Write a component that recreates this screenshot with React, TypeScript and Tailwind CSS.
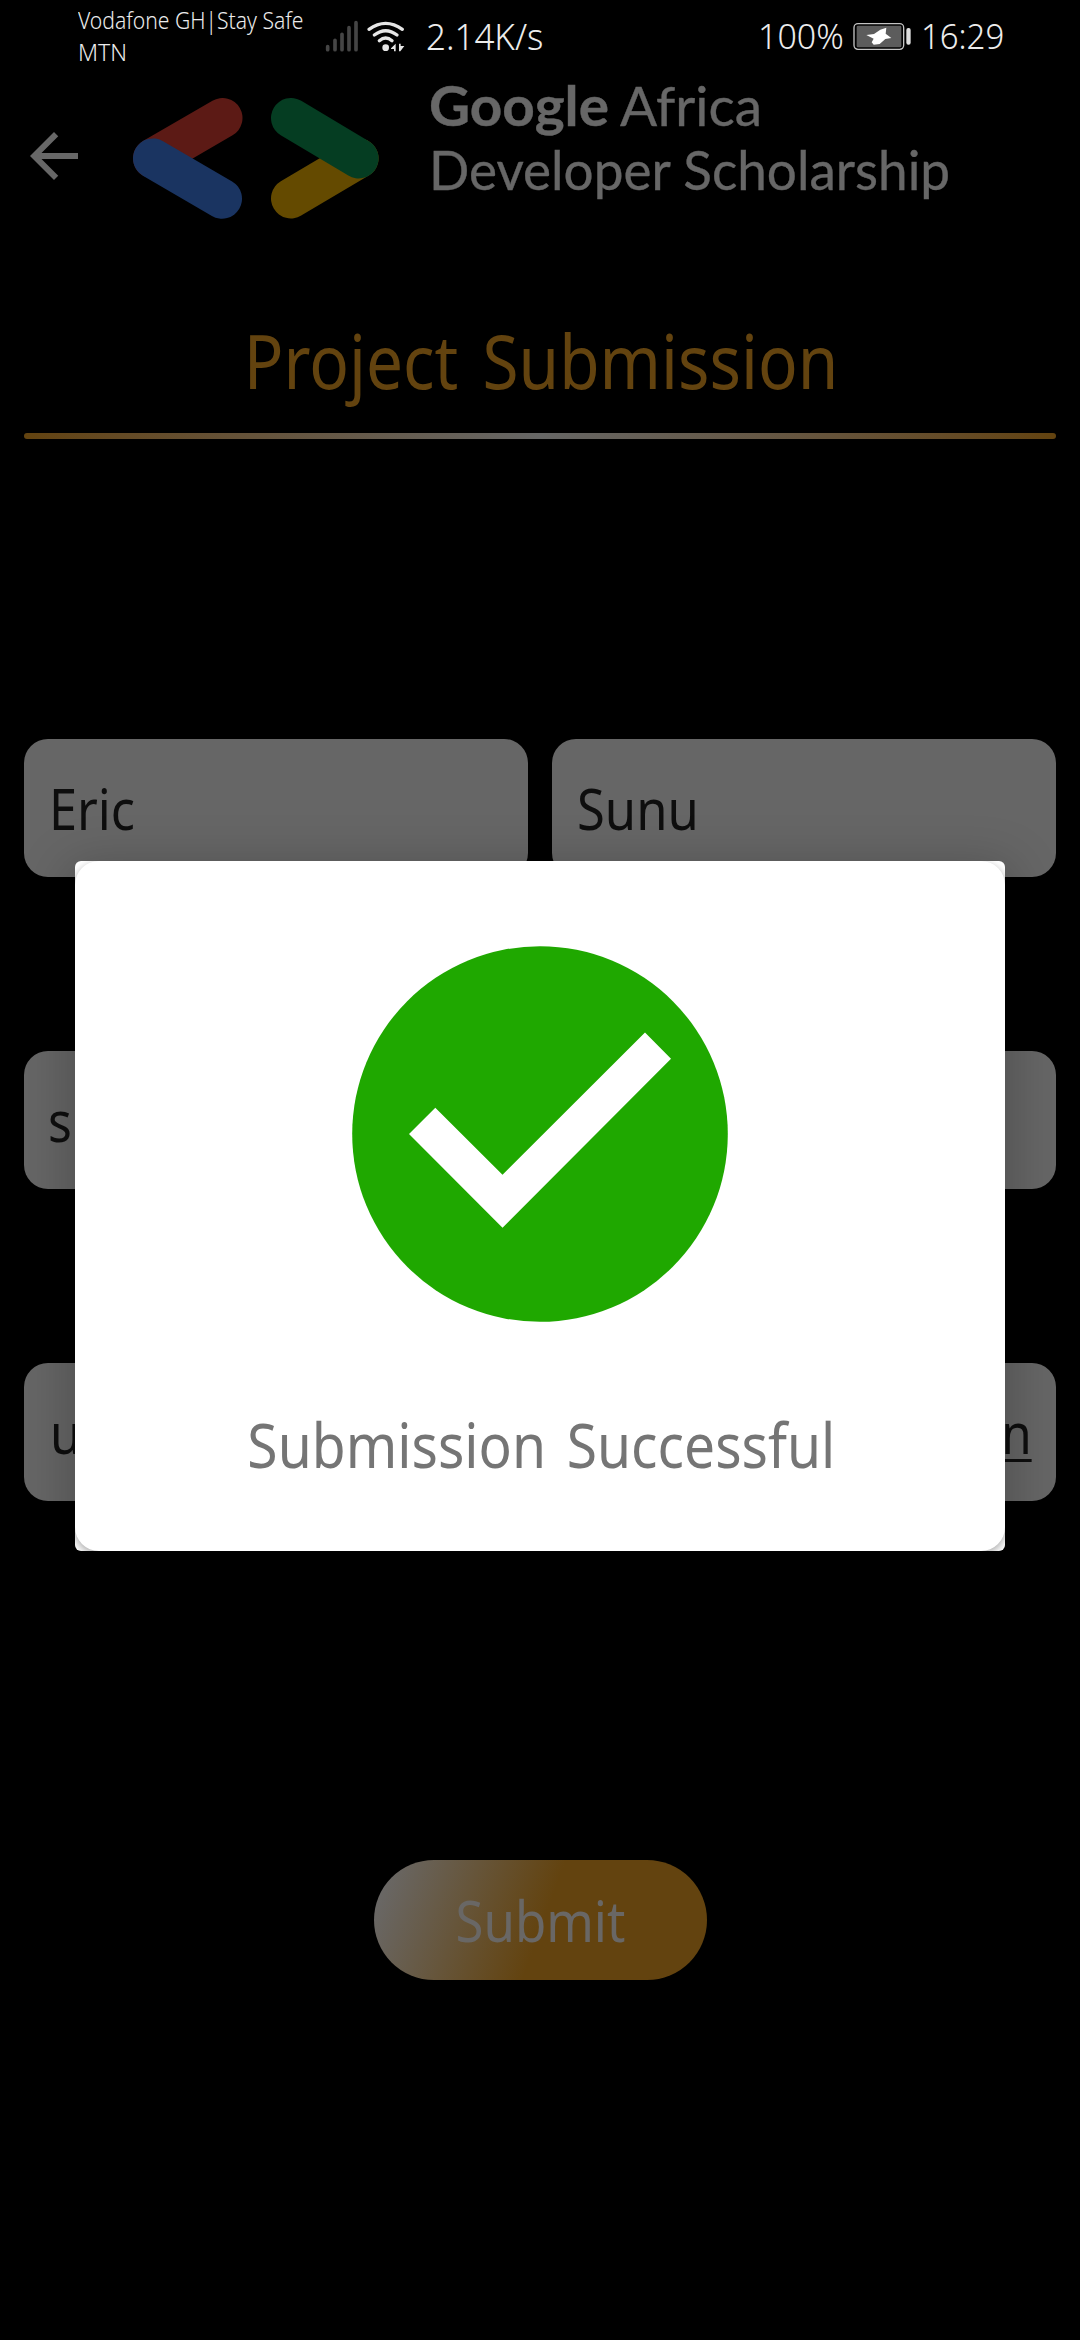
import type { ReactNode } from "react";

function SignalAndWifi() {
  return (
    <svg width="95" height="50" viewBox="0 0 285 150" fill="none" className="shrink-0">
      <g stroke="#454545" strokeWidth="11" strokeLinecap="round">
        <path d="M23 110V119M45 91V119M66 73V119M87 53V119M108 38V119" />
      </g>
      <g stroke="#e6e6e6" strokeWidth="10" strokeLinecap="round">
        <path d="M147 58Q197 22 247 58" />
        <path d="M163 75Q197 49 231 75" />
        <path d="M178 92Q197 76 216 92" />
      </g>
      <circle cx="197" cy="113" r="10" fill="#e6e6e6" />
      <path d="M213 115L227 101V124H222V117H213ZM237 124V101H242V108H253L241 124Z" fill="#e6e6e6" />
    </svg>
  );
}

function Battery() {
  return (
    <svg width="75" height="50" viewBox="0 0 225 150" fill="none" className="shrink-0">
      <rect x="27" y="41" width="149" height="77" rx="12" stroke="#c4c4c4" strokeWidth="4" />
      <rect x="35" y="47" width="134" height="65" rx="4" fill="#5c5c5c" />
      <rect x="184" y="54" width="13" height="50" rx="6" fill="#dedede" />
      <path d="M64 75L87 72L106 59L124 53L122 71L139 84L121 87L104 102L86 104L80 97L86 86Z" fill="#fff" />
    </svg>
  );
}

function StatusBar() {
  return (
    <div className="flex h-[72px] items-start font-['Noto_Sans',sans-serif] font-light text-[#ececec]">
      <div className="ml-[78px] w-[242px] pt-1 text-[23px] leading-8 whitespace-nowrap">
        <div className="origin-left scale-x-[0.918]">Vodafone GH|Stay Safe</div>
        <div>MTN</div>
      </div>
      <div className="pt-[10px]">
        <SignalAndWifi />
      </div>
      <div className="ml-[11px] w-[334px] origin-left scale-x-[0.97] text-[36px] leading-[74px]">2.14K/s</div>
      <div className="-ml-[2px] w-[87px] origin-left scale-x-[0.97] text-[35px] leading-[72px]">100%</div>
      <div className="pt-[10px]">
        <Battery />
      </div>
      <div className="ml-px origin-left scale-x-[0.94] text-[35px] leading-[72px]">16:29</div>
    </div>
  );
}

function BracketsLogo() {
  return (
    <svg width="246" height="122" viewBox="133 98 246 122" fill="none" strokeWidth="40" strokeLinecap="round">
      <path d="M222.5 118L153 158.4" stroke="#5c1a15" />
      <path d="M153 158.4L222 198.7" stroke="#1a3461" />
      <path d="M291 198.4L358.6 158.4" stroke="#644a00" />
      <path d="M291 118L358.6 158.4" stroke="#053d22" />
    </svg>
  );
}

function Header() {
  return (
    <header className="flex h-[168px] text-[#676767]">
      <svg viewBox="0 0 24 24" className="mt-12 ml-[18px] size-[72px]" fill="currentColor">
        <path d="M20 11H7.83l5.59-5.59L12 4l-8 8 8 8 1.41-1.41L7.83 13H20v-2z" />
      </svg>
      <div className="mt-[26px] ml-[43px]">
        <BracketsLogo />
      </div>
      <div className="mt-px ml-[50px] font-['Lato',sans-serif] text-[55px] leading-[64px] whitespace-nowrap [-webkit-text-stroke:0.4px_#676767]">
        <div className="flex">
          <span className="w-[191px] origin-left scale-x-[1.03] font-bold">Google</span>
          <span className="origin-left">Africa</span>
        </div>
        <div className="origin-left scale-x-[0.965]">Developer Scholarship</div>
      </div>
    </header>
  );
}

function Field({ children }: { children?: ReactNode }) {
  return (
    <div className="flex h-[138px] flex-1 items-center justify-between rounded-[24px] bg-[#666] px-6 font-['Noto_Sans',sans-serif] text-[56px] leading-none text-[#0e0e0e]">
      {children}
    </div>
  );
}

function SuccessDialog() {
  return (
    <div className="absolute top-[861px] left-[75px] h-[690px] w-[930px] rounded-[6px] bg-white shadow-[0_12px_50px_8px_rgba(0,0,0,0.22)]">
      <div className="h-full overflow-hidden rounded-[6px]">
        <div className="flex h-full flex-col items-center rounded-[24px] bg-white pt-[85px] shadow-[0_3px_8px_rgba(0,0,0,0.35)]">
          <svg width="376" height="376" viewBox="352 946 376 376">
            <circle cx="540" cy="1134" r="187.8" fill="#1fa800" />
            <path d="M409 1134L435.3 1107.7L502.5 1174.7L645 1032.5L671 1058.7L502.5 1227.7Z" fill="#fff" />
          </svg>
          <div className="mt-[72px] ml-[2px] scale-x-[0.89] font-['Noto_Sans',sans-serif] text-[62px] leading-[100px] [word-spacing:7px] whitespace-nowrap text-[#757575]">
            Submission Successful
          </div>
        </div>
      </div>
    </div>
  );
}

export default function App() {
  return (
    <div className="relative h-[2340px] w-[1080px] overflow-hidden bg-black">
      <StatusBar />
      <Header />
      <h1 className="mt-[71px] ml-[2px] scale-x-[0.888] text-center font-['Noto_Sans',sans-serif] text-[74px] leading-[100px] [word-spacing:8px] text-[#63430f]">
        Project Submission
      </h1>
      <div className="mx-6 mt-[22px] h-[6px] rounded-full bg-linear-to-r from-[#63430f] via-[#666665] to-[#63430f]" />
      <form className="mt-[300px] flex flex-col gap-[174px] px-6">
        <div className="flex gap-6">
          <Field>
            <span className="ml-px origin-left scale-x-[0.9]">Eric</span>
          </Field>
          <Field>
            <span className="ml-px origin-left scale-x-[0.905]">Sunu</span>
          </Field>
        </div>
        <div className="flex">
          <Field>
            <span className="origin-left scale-x-[0.89]">su</span>
          </Field>
        </div>
        <div className="flex">
          <Field>
            <span className="ml-[2px] origin-left scale-x-[0.9]">u</span>
            <span className="origin-right scale-x-[0.88] underline decoration-[3px] underline-offset-[5px]">n</span>
          </Field>
        </div>
      </form>
      <div className="mt-[359px] flex justify-center">
        <button className="h-[120px] w-[333px] rounded-full bg-[linear-gradient(110deg,#696765_5%,#63430f_51%)] font-['Noto_Sans',sans-serif] text-[56px] leading-none text-[#696765]">
          <span className="inline-block scale-x-[0.91]">Submit</span>
        </button>
      </div>
      <SuccessDialog />
    </div>
  );
}
